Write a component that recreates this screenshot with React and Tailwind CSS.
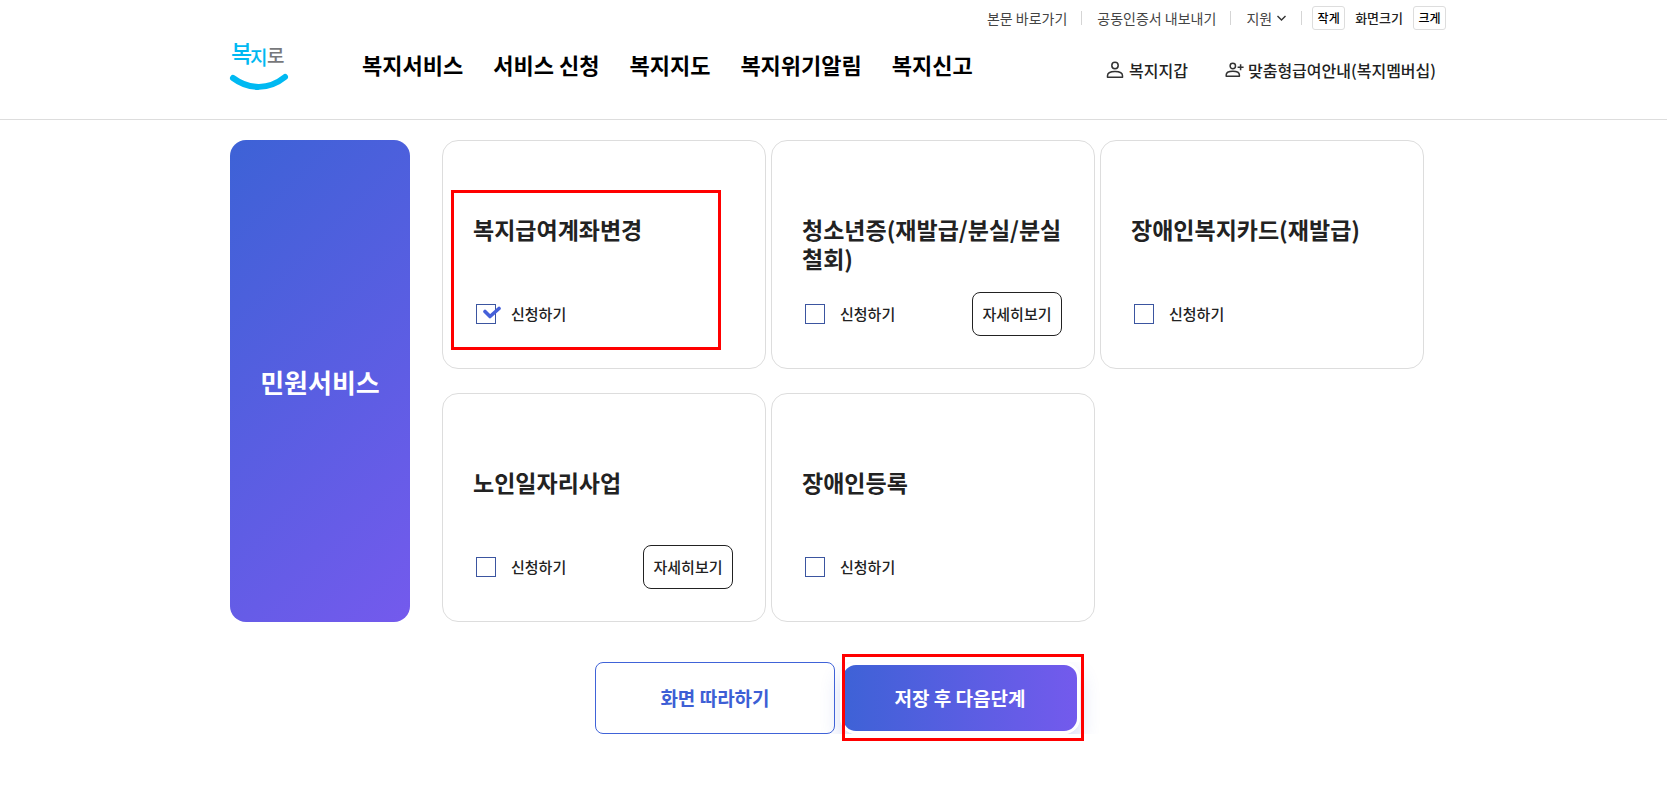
import React, { useState } from 'react';

const menus = ['복지서비스', '서비스 신청', '복지지도', '복지위기알림', '복지신고'];

const services = [
  { id: 'account', title: '복지급여계좌변경', detail: false, marked: true },
  { id: 'youth', title: '청소년증(재발급/분실/분실철회)', detail: true },
  { id: 'card', title: '장애인복지카드(재발급)', detail: false },
  { id: 'senior', title: '노인일자리사업', detail: true },
  { id: 'disabled', title: '장애인등록', detail: false },
];

const Logo = () => (
  <a href="#" aria-label="복지로" className="block shrink-0">
    <svg className="overflow-visible" width="58" height="52" viewBox="0 0 58 52" fontWeight="500">
      <text x="1" y="24" fontSize="23" fill="#00b9f2">복</text>
      <text x="20" y="27" fontSize="19" fill="#00b9f2">지</text>
      <text x="37" y="25" fontSize="19" fill="#77787b">로</text>
      <path d="M3 40C19 52 39 52 55 39" fill="none" stroke="#00b9f2" strokeWidth="6" strokeLinecap="round" />
    </svg>
  </a>
);

const PersonIcon = () => (
  <svg width="18" height="18" viewBox="0 0 18 18" fill="none" stroke="#333" strokeWidth="1.5" strokeLinejoin="round">
    <circle cx="9" cy="4.5" r="3.2" />
    <path d="M1.5 16.2v-1.4c0-2.6 3-4.3 7.5-4.3s7.5 1.7 7.5 4.3v1.4z" />
  </svg>
);

const PersonAddIcon = () => (
  <svg width="19" height="18" viewBox="0 0 19 18" fill="none" stroke="#333" strokeWidth="1.5" strokeLinejoin="round">
    <circle cx="7.8" cy="5" r="2.7" />
    <path d="M1.2 15.2V14c0-2.2 2.6-3.7 6.6-3.7s6.6 1.5 6.6 3.7v1.2zM12.6 6.3h6M15.6 3.3v6" />
  </svg>
);

const Divider = () => <span className="h-[14px] w-px bg-[#d5d5d5]" />;

const Header = () => (
  <header className="h-[120px] border-b border-[#ddd] pl-[9px]">
    <div className="mx-auto max-w-[1216px]">
      <div className="flex h-9 items-center justify-end text-sm text-[#444]">
        <a href="#content" className="mr-[14px]">본문 바로가기</a>
        <Divider />
        <a href="#" className="mr-[14px] ml-[15px]">공동인증서 내보내기</a>
        <Divider />
        <button type="button" className="mr-[14px] ml-[15px] flex items-center gap-1">
          지원
          <svg width="11" height="7" viewBox="0 0 11 7" fill="none" stroke="#333" strokeWidth="1.4">
            <path d="M1.5 1l4 4 4-4" />
          </svg>
        </button>
        <Divider />
        <button type="button" className="ml-[10px] h-6 w-[33px] rounded-[3px] border border-[#ddd] text-xs font-medium text-black">작게</button>
        <span className="mx-[10px] text-[13px] font-medium text-[#222]">화면크기</span>
        <button type="button" className="h-6 w-[33px] rounded-[3px] border border-[#ddd] text-xs font-medium text-black">크게</button>
      </div>
      <div className="flex items-center pt-[2px]">
        <Logo />
        <nav className="ml-[74px] flex gap-[30px] text-[22px] font-bold text-black">
          {menus.map((menu) => (
            <a key={menu} href="#">{menu}</a>
          ))}
        </nav>
        <div className="ml-auto flex gap-[37px] pt-3 pr-[10px] font-medium text-[#222]">
          <a href="#" className="flex items-center gap-[5px]"><PersonIcon />복지지갑</a>
          <a href="#" className="flex items-center gap-1"><PersonAddIcon />맞춤형급여안내(복지멤버십)</a>
        </div>
      </div>
    </div>
  </header>
);

const ServiceCard = ({ service, checked, onChange }) => (
  <li className="relative rounded-[16px] border border-[#ddd] pt-[74px] pr-8 pb-8 pl-[30px]">
    <h3 className="min-h-[58px] text-[23px] leading-[29px] font-bold text-[#222]">{service.title}</h3>
    <div className="mt-[19px] flex h-11 items-center justify-between pl-[3px]">
      <label className="flex items-center gap-[15px] text-[15px] font-medium text-[#222]">
        <span className="relative flex">
          <input
            type="checkbox"
            checked={checked}
            onChange={onChange}
            className="h-5 w-5 appearance-none border border-[#3b55a0] bg-white"
          />
          {checked && (
            <svg className="pointer-events-none absolute top-[2px] left-[7px]" width="18" height="13" viewBox="0 0 18 13" fill="none" stroke="#4560d9" strokeWidth="3.6" strokeLinecap="round" strokeLinejoin="round">
              <path d="M2 5.5l5 5L16 2.5" />
            </svg>
          )}
        </span>
        신청하기
      </label>
      {service.detail && (
        <button type="button" className="h-11 w-[90px] rounded-lg border border-[#222] text-[15px] font-medium text-[#222]">
          자세히보기
        </button>
      )}
    </div>
    {service.marked && (
      <span className="pointer-events-none absolute top-[49px] left-2 h-[160px] w-[270px] border-3 border-[#f00]" />
    )}
  </li>
);

const App = () => {
  const [selected, setSelected] = useState(['account']);

  const toggle = (id) => {
    setSelected((prev) => (prev.includes(id) ? prev.filter((item) => item !== id) : [...prev, id]));
  };

  return (
    <div className="bg-white font-['Noto_Sans_CJK_KR',sans-serif]">
      <Header />
      <main id="content" className="pt-5 pb-[68px] pl-[9px]">
        <div className="mx-auto max-w-[1216px]">
          <section className="flex gap-8 pr-[22px]">
            <div className="flex w-[180px] shrink-0 items-center justify-center rounded-[16px] bg-[linear-gradient(135deg,#3d62d6,#745aed)]">
              <h2 className="text-[26px] font-bold text-white">민원서비스</h2>
            </div>
            <ul className="grid flex-1 grid-cols-3 gap-x-[5px] gap-y-6">
              {services.map((service) => (
                <ServiceCard
                  key={service.id}
                  service={service}
                  checked={selected.includes(service.id)}
                  onChange={() => toggle(service.id)}
                />
              ))}
            </ul>
          </section>

          {/* 하단 버튼 */}
          <div className="relative mt-10 flex justify-center pr-px">
            <div className="flex gap-[5px] overflow-hidden px-6 text-[19px] font-bold">
              <button type="button" className="h-[72px] w-[240px] rounded-lg border border-[#4063d8] text-[#3d5fd5]">
                화면 따라하기
              </button>
              <button
                type="button"
                className="h-[72px] w-[240px] rounded-[16px] border-3 border-white bg-[linear-gradient(90deg,#3d62d6,#745aed)] bg-origin-border text-white shadow-[0_10px_20px_rgba(64,90,216,0.22)]"
              >
                저장 후 다음단계
              </button>
            </div>
            <span className="pointer-events-none absolute -top-2 left-1/2 ml-1 h-[87px] w-[242px] border-3 border-[#f00]" />
          </div>
        </div>
      </main>
    </div>
  );
};

export default App;
